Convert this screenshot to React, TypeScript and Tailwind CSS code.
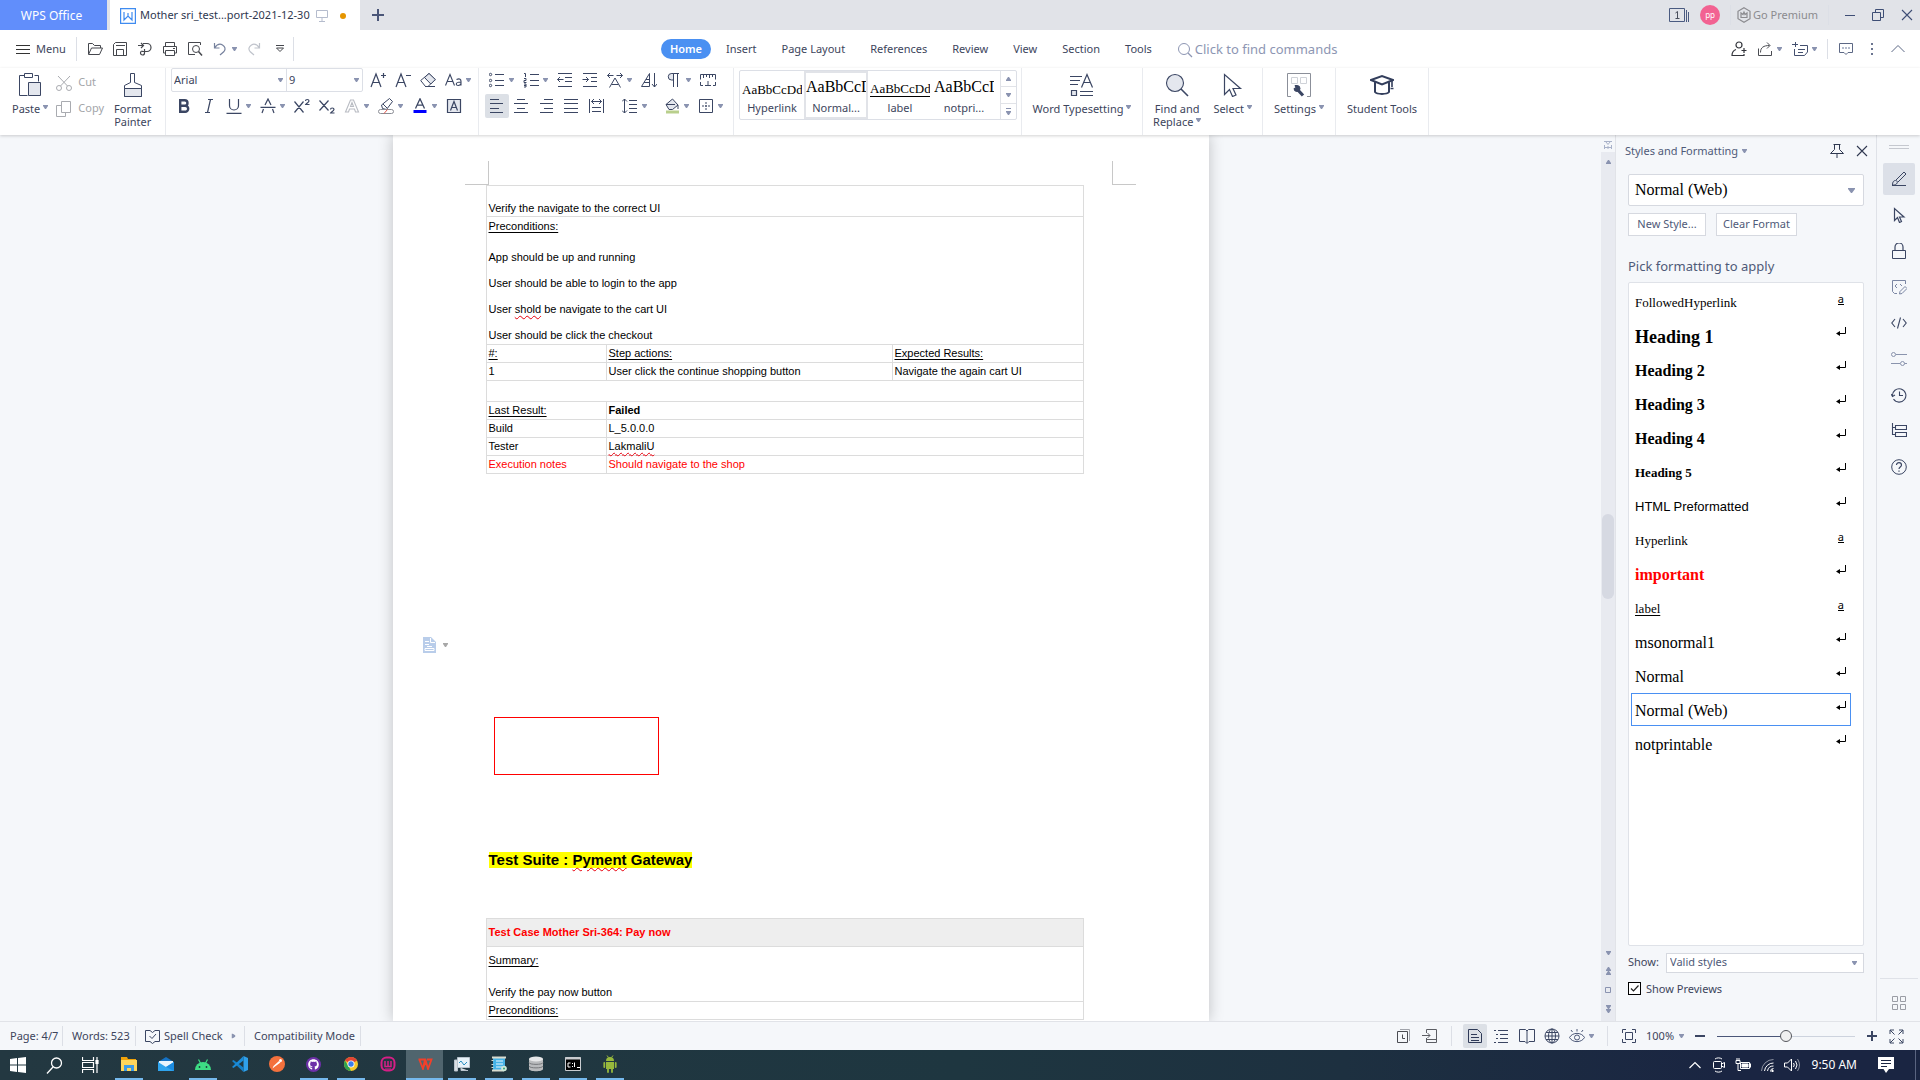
import React from "react";
import { FaGithub } from "react-icons/fa";

const INK = "#3b4663";

type IconProps = { w?: number; h?: number; c?: string; sw?: number; children: React.ReactNode };

function Icon({ w = 16, h = 16, c = INK, sw = 1, children }: IconProps) {
  return (
    <svg width={w} height={h} viewBox={`0 0 ${w} ${h}`} fill="none" stroke={c} strokeWidth={sw} className="shrink-0" aria-hidden="true">
      {children}
    </svg>
  );
}

function Caret({ c = "#8a93b0" }: { c?: string }) {
  return (
    <svg width="5" height="4" viewBox="0 0 5 4" className="shrink-0" aria-hidden="true">
      <path d="M0 0h5v1L3 4H2L0 1z" fill={c} />
    </svg>
  );
}

function Sep({ tall = false }: { tall?: boolean }) {
  return <span className={tall ? "w-px shrink-0 self-stretch bg-[#e9ebef]" : "h-5 w-px shrink-0 bg-[#dcdfe6]"} />;
}

function Tool({ label, caret, on, children }: { label: string; caret?: boolean; on?: boolean; children: React.ReactNode }) {
  return (
    <button
      type="button"
      aria-label={label}
      className={on ? "-mx-1 flex h-6 w-6 shrink-0 items-center justify-center rounded-xs bg-[#dce0e6]" : "flex h-6 shrink-0 items-center gap-1"}
    >
      {children}
      {caret && <Caret />}
    </button>
  );
}

/* ---------- Title bar ---------- */

function TitleBar() {
  return (
    <header className="flex h-[30px] shrink-0 items-center bg-[#e1e3e8] text-[11px] text-[#2f3850]">
      <button type="button" className="mr-[3px] flex h-full w-[107px] items-center justify-center bg-[#618efb] pr-1 pt-px text-xs text-white">
        WPS Office
      </button>
      <div className="flex h-full w-[250px] items-center bg-white pl-2.5 pt-px">
        <Icon c="#3f8bf0">
          <path d="M.5.5h15v15H.5z" strokeWidth="1.4" />
          <path d="M4 4v8l4-4 4 4V4M8 5v3" strokeWidth="1.2" />
        </Icon>
        <span className="ml-1 whitespace-nowrap">Mother sri_test...port-2021-12-30</span>
        <span className="ml-1.5 flex items-center gap-3">
          <Icon w={12} h={12} c="#b5bccd">
            <path d="M.5.5h11v7H.5zM6 8v3M3 11.5h6" />
          </Icon>
          <span className="h-1.5 w-1.5 rounded-full bg-[#e59500]" />
        </span>
      </div>
      <button type="button" aria-label="New tab" className="ml-3">
        <Icon w={12} h={12} sw={2} c="#4a5678">
          <path d="M6 0v12M0 6h12" />
        </Icon>
      </button>
      <div className="ml-auto flex h-full items-center">
        <button type="button" aria-label="Windows" className="mr-[11px]">
          <Icon w={20} h={15} c="#4a5a80">
            <path d="M.5.5h15v13H.5zM17.5 2v12M19.5 4v10" />
            <path d="M6.500 5L8.500 3.500V10.500M6.500 10.500h4" stroke="#4a4f5c" />
          </Icon>
        </button>
        <span className="mr-2.5 flex h-5 w-5 items-center justify-center rounded-full bg-[#f26292] text-[8px] text-white">pp</span>
        <Sep />
        <button type="button" className="ml-1.5 mr-2.5 flex items-center gap-0.5 text-[#8b8b8f]">
          <Icon w={14} h={16} c="#8b8b8f" sw={1.2}>
            <path d="M7 .8l6 3.500v7.400l-6 3.500-6-3.500V4.300z" />
            <path d="M4 10.500V6l2 1.500L7 5l1 2.500L10 6v4.500z" />
          </Icon>
          Go Premium
        </button>
        <Sep />
        <div className="ml-4 mr-[7px] flex items-center gap-[17px]">
          <button type="button" aria-label="Minimize">
            <Icon w={10} h={12} c="#3e4e75"><path d="M0 6.500h10" /></Icon>
          </button>
          <button type="button" aria-label="Restore">
            <Icon w={12} h={12} c="#3e4e75"><path d="M.5 3.500h8v8h-8zM3.500 3.500v-3h8v8h-3" /></Icon>
          </button>
          <button type="button" aria-label="Close">
            <Icon w={12} h={12} c="#3e4e75" sw={1.1}><path d="M1 1l10 10M11 1L1 11" /></Icon>
          </button>
        </div>
      </div>
    </header>
  );
}

/* ---------- Menu row ---------- */

const tabs = ["Insert", "Page Layout", "References", "Review", "View", "Section", "Tools"];

function MenuRow() {
  return (
    <nav className="flex h-[38px] shrink-0 items-center bg-white text-[#3d455c]">
      <div className="flex w-[661px] shrink-0 items-center pl-4">
        <button type="button" className="flex items-center gap-1.5 text-[11px]">
          <Icon w={14} h={11} c="#333"><path d="M0 1.500h14M0 5.500h14M0 9.500h14" /></Icon>
          Menu
        </button>
        <span className="ml-2.5 mr-2.5"><Icon w={1} h={24}><path d="M.5 0v24" stroke="#dcdfe6" /></Icon></span>
        <div className="flex items-center gap-[9px]">
          <Tool label="Open">
            <Icon c="#45474d"><path d="M1.500 13V2.500h4l2 2h6V7M1.500 13.500L4.500 7h11l-3 6.500z" /></Icon>
          </Tool>
          <Tool label="Save">
            <Icon c="#45474d"><path d="M1.500 3.500L3.500 1.500h11v13h-13zM4 4.500h9M4.500 14V8.500h7V14" /></Icon>
          </Tool>
          <Tool label="Export to PDF">
            <Icon c="#45474d" sw={1.2}><path d="M1 4.500h5M4 2l2.500 2.500L4 7M6 2.500h4a4 4 0 010 8H5M7.500 8v4a2 2 0 11-2-2" /></Icon>
          </Tool>
          <Tool label="Print">
            <Icon c="#45474d"><path d="M3.500 5V1.500h9V5M3.500 12h-2V5.500h13V12h-2M3.500 9.500h9v5h-9zM11 7.500h2" /></Icon>
          </Tool>
          <Tool label="Print preview">
            <Icon c="#45474d"><path d="M8 13.500H1.500v-12h12V4" /><circle cx="9" cy="8" r="3.500" /><path d="M11.500 10.500L15 14.500" strokeWidth="1.5" /></Icon>
          </Tool>
          <Tool label="Undo" caret>
            <Icon c="#76819d" sw={1.200}><path d="M2.500 2v5h5M2.500 7C5 3.500 8 2.500 10.500 4s3.500 4 1.500 6.500L8 14" /></Icon>
          </Tool>
          <span className="mr-1 flex">
            <Tool label="Redo">
              <Icon c="#bfc3cb" sw={1.200}><path d="M13.500 2v5h-5M13.500 7C11 3.500 8 2.500 5.500 4S2 8 4 10.500L8 14" /></Icon>
            </Tool>
          </span>
          <Tool label="Customize toolbar">
            <Icon w={10} h={10} c="#45474d"><path d="M1 1.500h8M1.500 4L5 7.500 8.500 4z" /></Icon>
          </Tool>
        </div>
        <span className="ml-2"><Icon w={1} h={24}><path d="M.5 0v24" stroke="#dcdfe6" /></Icon></span>
      </div>
      <div className="flex shrink-0 items-center gap-[25px] whitespace-nowrap pt-px text-[11px]">
        <button type="button" className="-mr-2.5 -mt-px h-5 w-[50px] rounded-full bg-[#4a90f2] text-[11px] font-semibold text-white">Home</button>
        {tabs.map((t) => (
          <button key={t} type="button">{t}</button>
        ))}
        <button type="button" className="flex items-center gap-0.5 text-[13px] text-[#8d96b3]">
          <Icon c="#8d96b3"><circle cx="7" cy="7" r="5.500" /><path d="M11 11l4 4" strokeWidth="1.3" /></Icon>
          Click to find commands
        </button>
      </div>
      <div className="ml-auto flex items-center gap-2.5 pr-3.5">
        <Tool label="Invite">
          <Icon c="#33353b" sw={1.200}><circle cx="8" cy="4" r="3" /><path d="M5 8.500c-3 1-4 3-4 6h12v-1.500M10.500 9.500h5M13 7v5" /></Icon>
        </Tool>
        <Tool label="Share" caret>
          <Icon c="#4a4c52"><path d="M1.500 7.500v7h13V10M3.500 11.500c0-5 3-7 9-7M10 1.500l3 3-3 3" /></Icon>
        </Tool>
        <Tool label="Notes" caret>
          <Icon c="#44506f"><path d="M0 3.500h6M3.500 1v5M8 4.500h7.500V11l-3 3.500h-10V8M6 8.500h7M6 11.500h5" /></Icon>
        </Tool>
        <Sep />
        <Tool label="Comments">
          <Icon c="#5c6885"><path d="M1.500 2.500h13v9H10l-2 2-2-2H1.500z" /><path d="M4 7h2M7 7h2M10 7h2" stroke="#b5bccd" strokeWidth="2" /></Icon>
        </Tool>
        <Tool label="More">
          <Icon c="#6b7590"><path d="M7 3h2M7 8h2M7 13h2" strokeWidth="2" /></Icon>
        </Tool>
        <Tool label="Collapse ribbon">
          <Icon c="#5c6885"><path d="M1.500 11L8 4.500l6.500 6.500" /></Icon>
        </Tool>
      </div>
    </nav>
  );
}

/* ---------- Ribbon ---------- */

function BigTool({ icon, lines, caret }: { icon: React.ReactNode; lines: string[]; caret?: boolean }) {
  return (
    <button type="button" className="flex shrink-0 flex-col items-center whitespace-nowrap pt-[5px] text-[11px] leading-[13px]">
      <span className="mb-[5px] flex h-6">{icon}</span>
      {lines.map((l, i) => (
        <span key={l} className="flex items-center gap-[3px]">
          {l}
          {caret && i === lines.length - 1 && <span className="mb-1"><Caret /></span>}
        </span>
      ))}
    </button>
  );
}

function StyleCard({ sample, name, on }: { sample: React.ReactNode; name: string; on?: boolean }) {
  return (
    <button
      type="button"
      className={
        on
          ? "flex w-16 flex-col items-center justify-end gap-0.5 border-2 border-[#e1e3e8] text-[11px]"
          : "flex w-16 flex-col items-center justify-end gap-0.5 border-2 border-transparent text-[11px]"
      }
    >
      {sample}
      <span className="leading-[18px]">{name}</span>
    </button>
  );
}

const sampleSmall = "w-full overflow-hidden whitespace-nowrap text-left font-['Liberation_Serif',serif] text-[13px] leading-[15px] text-black";
const sampleBig = "w-full overflow-hidden whitespace-nowrap text-left font-['Liberation_Serif',serif] text-base leading-5 text-black";

function Ribbon() {
  return (
    <section className="z-10 flex h-[67px] shrink-0 bg-white text-[11px] text-[#3d455c] shadow-[0_1px_3px_rgba(0,0,0,0.18)]">
      <div className="flex w-[165px] shrink-0 gap-2 pl-3">
        <BigTool
          lines={["Paste"]}
          caret
          icon={
            <Icon w={22} h={24}>
              <path d="M5.500 2.500h-5v20h8M15.500 2.500h4v6" />
              <path d="M5.500.5h8v4h-8z" fill="#fff" />
              <path d="M9.500 9.500h12v13h-12z" fill="#e4e7ee" />
            </Icon>
          }
        />
        <div className="mr-0.5 flex flex-col gap-[9px] pt-1.5 text-[11px] text-[#a3a5a9]">
          <button type="button" className="flex h-[17px] items-center gap-1.5">
            <Icon c="#a9abb0"><circle cx="3" cy="13" r="2.500" /><circle cx="13" cy="13" r="2.500" /><path d="M4.500 11L14 1M11.500 11L2 1" /></Icon>
            Cut
          </button>
          <button type="button" className="flex h-[17px] items-center gap-1.5">
            <Icon c="#a9abb0"><path d="M5.500.5h9v11h-9z" /><path d="M5 4.500H.5v11h9V12" /></Icon>
            Copy
          </button>
        </div>
        <BigTool
          lines={["Format", "Painter"]}
          icon={
            <Icon w={20} h={24}>
              <path d="M7.500 9.500v-9h4v9l7 3v11h-17v-11z" />
              <path d="M1.500 15.500h17v8h-17z" fill="#e4e7ee" />
            </Icon>
          }
        />
      </div>
      <Sep tall />
      <div className="flex w-[312px] shrink-0 flex-col gap-0.5 pl-[5px]">
        <div className="flex items-center gap-[9px]">
          <div className="-mr-0.5 flex h-6 w-48 rounded-xs border border-[#dcdfe6]">
            <div className="flex w-[115px] items-center border-r border-[#dcdfe6] pl-0.5 pr-[3px]">
              <select aria-label="Font" className="min-w-0 flex-1 appearance-none bg-transparent text-[11px] outline-none"><option>Arial</option></select>
              <Caret />
            </div>
            <div className="flex flex-1 items-center pl-0.5 pr-[3px]">
              <select aria-label="Font size" className="min-w-0 flex-1 appearance-none bg-transparent text-[11px] outline-none"><option>9</option></select>
              <Caret />
            </div>
          </div>
          <Tool label="Increase font size"><Icon sw={1.2}><path d="M1 15L6 2l5 13M3 10.500h6M11 3.500h5M13.500 1v5" /></Icon></Tool>
          <Tool label="Decrease font size"><Icon sw={1.2}><path d="M1 15L6 2l5 13M3 10.500h6M11 3.500h5" /></Icon></Tool>
          <Tool label="Clear formatting"><Icon><path d="M.7 8.500L9 1.500l6.300 6L8 14.500H5.500z" /><path d="M4.500 5.500L9 1.500l6.300 6-4.500 4.500z" fill="#e4e7ee" /><path d="M5 14.500h10" /></Icon></Tool>
          <Tool label="Change case" caret>
            <Icon w={17} sw={1.1}><path d="M.5 13.500L5 2.500l4.500 11M2 9.500h6M11.500 7.500c3.500-1.500 4.500 0 4.500 2v4M16 10c-3 0-4.700.500-4.700 2 0 2 3.700 2 4.700-.5" /></Icon>
          </Tool>
        </div>
        <div className="flex items-center gap-[9px] pl-[5px]">
          <Tool label="Bold"><Icon sw={2.4}><path d="M4.200 2.200h4.500a2.800 2.800 0 010 5.600H4.200zM4.200 7.800h5a3 3 0 010 6H4.200z" /></Icon></Tool>
          <Tool label="Italic"><Icon sw={1.2}><path d="M7 1.500h5M4 14.500h5M9.500 1.500l-3 13" /></Icon></Tool>
          <Tool label="Underline" caret><Icon sw={1.2}><path d="M3.500 1v6.500a4.500 4.500 0 009 0V1M.5 15.400h15" /></Icon></Tool>
          <Tool label="Strikethrough" caret><Icon sw={1.2}><path d="M5 7l3-6 3 6M3.500 11L2 15M12.500 11l1.500 4M.5 9.400h15" /></Icon></Tool>
          <Tool label="Superscript"><Icon sw={1.2}><path d="M.5 3.500l9 11M9.500 3.500l-9 11M11.500 3c0-2 3.500-2 3.500 0 0 1.200-3.500 3-3.500 3.500H15.500" /></Icon></Tool>
          <Tool label="Subscript"><Icon sw={1.2}><path d="M.5 2.500l9 10M9.500 2.500l-9 10M11.500 11.500c0-2 3.500-2 3.500 0 0 1.200-3.500 3-3.500 3.500H15.500" /></Icon></Tool>
          <Tool label="Text effects" caret><Icon c="#b9bcc3" sw={1.1}><path d="M1.500 14L6.500 2h3l5 12h-3l-1-3h-5l-1 3zM6.500 8.500h3L8 4.500z" /></Icon></Tool>
          <Tool label="Highlight" caret>
            <Icon><path d="M4.500 10.500L3.500 7l8-6.500 3 3-6 8z" /><path d="M5 6l4 4" /><rect x=".5" y="11.500" width="15" height="4" rx="2" fill="#fff" stroke="#8a8d95" /><path d="M6 15.500l3.500-4" stroke="#e2574c" /></Icon>
          </Tool>
          <Tool label="Font color" caret><Icon sw={1.3}><path d="M3.500 10.500L8 .8l4.500 9.700M5 7.200h6" /><path d="M1.500 13.500h13" stroke="#0000ff" strokeWidth="3" /></Icon></Tool>
          <Tool label="Character shading"><Icon sw={1.200}><path d="M1.500 1.500h13v13h-13z" fill="#e4e7ee" /><path d="M4.500 12.500L8 3.500l3.500 9M5.500 9.500h5" /></Icon></Tool>
        </div>
      </div>
      <Sep tall />
      <div className="flex w-[254px] shrink-0 flex-col gap-0.5 pl-2.5">
        <div className="flex items-center gap-[9px]">
          <Tool label="Bullets" caret><Icon><circle cx="1.500" cy="2.500" r="1.200" /><circle cx="1.500" cy="8.500" r="1.200" /><circle cx="1.500" cy="13.500" r="1.200" /><path d="M6 2.500h9M6 8.500h9M6 13.500h9" /></Icon></Tool>
          <Tool label="Numbering" caret><Icon><path d="M1 1.500h1.500v3.500M1 6.500h2v2H1v2h2.500M1 12h2v3H1M1 13.500h2M7 2.500h9M7 8.500h9M7 13.500h9" /></Icon></Tool>
          <Tool label="Decrease indent"><Icon><path d="M1 1.500h14M8 5.500h7M8 9.500h7M1 14.500h14M.5 7.500h6M3 5L.5 7.500 3 10" /></Icon></Tool>
          <Tool label="Increase indent"><Icon><path d="M1 1.500h14M9 5.500h6M9 9.500h6M1 14.500h14M.5 7.500h6M4 5l2.500 2.500L4 10" /></Icon></Tool>
          <Tool label="Text direction" caret><Icon><path d="M2.500 15.500L8 6l5.500 9.500M4.500 12.500h7M.5 3.500h6M9.500 3.500h6M3 1L.5 3.500 3 6M13 1l2.500 2.500L13 6" /></Icon></Tool>
          <Tool label="Sort"><Icon><path d="M.5 14.500L8.500 1.500v13zM3 10.500h5M5 7.500h3M13.500 1v14M11 12l2.500 3 2.500-3" /></Icon></Tool>
          <Tool label="Show marks" caret><Icon><path d="M7.500 15V1.500M11.500 15V1.500M5 1.500h8" /><path d="M7.500 1.500h-2a3 3 0 000 6.500h2z" fill="#e4e7ee" /></Icon></Tool>
          <Tool label="Tabs"><Icon><path d="M.5 7.500v-5h15v5M3.500 3v3M6.500 3v2M9.500 3v3M12.500 3v2M.5 10v3.500H3M15.500 10v3.500H13M8 9v4.500M5 13.500h6" /></Icon></Tool>
        </div>
        <div className="flex items-center gap-[9px]">
          <Tool label="Align left" on><Icon><path d="M1 1.500h9M1 5.500h13M1 10.500h9M1 14.500h13" /></Icon></Tool>
          <Tool label="Align center"><Icon><path d="M3 1.500h8M0 5.500h14M3 10.500h8M0 14.500h14" /></Icon></Tool>
          <Tool label="Align right"><Icon><path d="M5 1.500h9M1 5.500h13M5 10.500h9M1 14.500h13" /></Icon></Tool>
          <Tool label="Justify"><Icon><path d="M0 1.500h14M0 5.500h14M0 10.500h14M0 14.500h14" /></Icon></Tool>
          <span className="mr-2 flex"><Tool label="Distribute"><Icon><path d="M.5 1v14M14.500 1v14M2.500 3.500h10M5 1L2.500 3.500 5 6M10 1l2.500 2.500L10 6M3 9.500h9M3 13.500h9" /></Icon></Tool></span>
          <span className="mr-2 flex"><Tool label="Line spacing" caret><Icon><path d="M2.500 1v14M0 3.500L2.500 1 5 3.500M0 12.500L2.500 15 5 12.500M7 2.500h8M7 6.500h8M7 10.500h8M7 14.500h8" /></Icon></Tool></span>
          <Tool label="Shading" caret><Icon><path d="M2 6.500L8.500 1l5.500 6-5.500 4.500H5z" fill="#e4e7ee" /><path d="M2 6.500h9M14 7v4" /><path d="M2 14h13" stroke="#b9cf8c" strokeWidth="3" /></Icon></Tool>
          <Tool label="Borders" caret><Icon><path d="M1.500 1.500h13v13h-13z" /><path d="M8 4v8M4 8h8" strokeDasharray="2 1" /></Icon></Tool>
        </div>
      </div>
      <Sep tall />
      <div className="flex w-[287px] shrink-0 items-start pl-[5px] pt-0.5">
        <div className="flex h-[50px] w-[278px] rounded-xs border border-[#dcdfe6]">
          <StyleCard name="Hyperlink" sample={<span className={sampleSmall}>AaBbCcDd</span>} />
          <StyleCard name="Normal..." on sample={<span className={sampleBig}>AaBbCcD</span>} />
          <StyleCard name="label" sample={<span className={sampleSmall + " border-b border-black"}>AaBbCcDd</span>} />
          <StyleCard name="notpri..." sample={<span className={sampleBig}>AaBbCcD</span>} />
          <div className="ml-auto flex w-4 flex-col divide-y divide-[#e1e3e8] border-l border-[#e1e3e8]">
            <button type="button" aria-label="Previous styles" className="flex flex-1 items-center justify-center"><span className="rotate-180"><Caret /></span></button>
            <button type="button" aria-label="Next styles" className="flex flex-1 items-center justify-center"><Caret /></button>
            <button type="button" aria-label="All styles" className="flex flex-1 flex-col items-center justify-center gap-0.5"><span className="h-px w-[5px] bg-[#8a93b0]" /><Caret /></button>
          </div>
        </div>
      </div>
      <Sep tall />
      <div className="flex w-[120px] shrink-0 justify-center">
        <BigTool lines={["Word Typesetting"]} caret icon={<Icon w={24} h={24} sw={1.2}><path d="M0 3.500h12M0 7.500h10M0 11.500h8M11.500 14.500L17 1.500l5.500 13M13.500 9.500h7M10 18.500h13M10 22.500h13" /><path d="M1.500 17.500h5v5h-5z" fill="#e4e7ee" /></Icon>} />
      </div>
      <Sep tall />
      <div className="flex w-[119px] shrink-0 justify-center gap-3">
        <BigTool lines={["Find and", "Replace"]} caret icon={<Icon w={24} h={24} sw={1.1}><circle cx="10" cy="10" r="8.500" fill="#e4e7ee" /><path d="M16 16l7 7" strokeWidth="1.6" /></Icon>} />
        <BigTool lines={["Select"]} caret icon={<Icon w={20} h={24} sw={1.2}><path d="M1.500 1.500v20l5-5 3 7 3.500-1.500-3-6.500h7.500z" fill="#fff" /></Icon>} />
      </div>
      <Sep tall />
      <div className="flex w-[72px] shrink-0 justify-center">
        <BigTool
          lines={["Settings"]}
          caret
          icon={
            <Icon w={24} h={24} c="#8b8f99">
              <path d="M4 23.500H.5V.5h23v23H20" />
              <path d="M4.500 4.500h6v6h-6zM13.500 4.500h6v6h-6z" stroke="#cfd2d8" />
              <path d="M10 16l6 6.500" stroke={INK} strokeWidth="3.200" />
              <path d="M8 12.500l1 2.500-2 .5a3 3 0 103-3z" fill={INK} stroke={INK} />
            </Icon>
          }
        />
      </div>
      <Sep tall />
      <div className="flex w-[92px] shrink-0 justify-center">
        <BigTool lines={["Student Tools"]} icon={<Icon w={24} h={24} sw={2} c="#333e5c"><path d="M1 7l11-4 11 4-11 4.500zM5 9.500V19c2 2.500 12 2.500 14 0V9.500" /><path d="M22 8v6M20.500 15.500h3" strokeWidth="1.6" /></Icon>} />
      </div>
      <Sep tall />
    </section>
  );
}

/* ---------- Document ---------- */

function Typo({ children }: { children: string }) {
  return <span className="underline decoration-red-600 decoration-wavy decoration-1 underline-offset-2">{children}</span>;
}

const cell = "border border-[#dcdcdc] p-0 pl-0.5 align-top";
const row = cell + " h-[18px] leading-[17px]";

function CaseTable() {
  return (
    <table className="w-full table-fixed border-collapse text-black">
      <colgroup>
        <col className="w-[120px]" />
        <col className="w-[286px]" />
        <col />
      </colgroup>
      <tbody>
        <tr><td colSpan={3} className="h-[31px] border border-[#dcdcdc] p-0 pl-0.5 align-bottom leading-[15px]">Verify the navigate to the correct UI</td></tr>
        <tr>
          <td colSpan={3} className={cell + " h-32 leading-[18px]"}>
            <p className="underline underline-offset-2">Preconditions:</p>
            <div className="mt-[13px] flex flex-col gap-2">
              <p>App should be up and running</p>
              <p>User should be able to login to the app</p>
              <p>User <Typo>shold</Typo> be navigate to the cart UI</p>
              <p>User should be click the checkout</p>
            </div>
          </td>
        </tr>
        <tr className="underline underline-offset-2">
          <td className={row}>#:</td>
          <td className={row}>Step actions:</td>
          <td className={row}>Expected Results:</td>
        </tr>
        <tr>
          <td className={row}>1</td>
          <td className={row}>User click the continue shopping button</td>
          <td className={row}>Navigate the again cart UI</td>
        </tr>
        <tr><td colSpan={3} className={cell + " h-[21px]"} /></tr>
        <tr><td className={row + " underline underline-offset-2"}>Last Result:</td><td colSpan={2} className={row + " font-bold"}>Failed</td></tr>
        <tr><td className={row}>Build</td><td colSpan={2} className={row}>L_5.0.0.0</td></tr>
        <tr><td className={row}>Tester</td><td colSpan={2} className={row}><Typo>LakmaliU</Typo></td></tr>
        <tr className="text-[#ff0000]"><td className={row}>Execution notes</td><td colSpan={2} className={row}>Should navigate to the shop</td></tr>
      </tbody>
    </table>
  );
}

function Document() {
  return (
    <main className="flex min-w-0 flex-1 justify-center overflow-hidden bg-[#f5f7fa]">
      <article className="w-[816px] shrink-0 bg-white pt-[26px] font-['Liberation_Sans',Arial,sans-serif] text-[11px] shadow-[0_0_14px_rgba(0,0,0,0.22)]">
        <div className="flex justify-between pl-[72px] pr-[73px]">
          <span className="h-6 w-6 border-b border-r border-[#c8c8c8]" />
          <span className="h-6 w-6 border-b border-l border-[#c8c8c8]" />
        </div>
        <div className="pl-[93px] pr-[125px]"><CaseTable /></div>
        <button type="button" aria-label="Paragraph layout" className="ml-[30px] mt-[163px] flex items-center gap-[7px]">
          <svg width="13" height="16" viewBox="0 0 13 16" aria-hidden="true">
            <path d="M0 0h8l5 5v11H0z" fill="#b9cdea" />
            <path d="M7.500 1v4.500H12M2 4.500h4M2 7.500h4M2 11.500h9v2H2zM4 9.500h5" stroke="#fff" fill="none" />
          </svg>
          <Caret c="#a8a8a8" />
        </button>
        <div className="ml-[101px] mt-16 h-[58px] w-[165px] border border-[#ff0000]" />
        <h2 className="ml-24 mt-[77px] w-fit bg-[#ffff00] text-[15px] font-bold leading-4 text-black">
          Test Suite : <Typo>Pyment</Typo> Gateway
        </h2>
        <div className="mt-[50px] pl-[93px] pr-[125px]">
          <table className="w-full border-collapse text-black">
            <tbody>
              <tr><th className="h-7 border border-[#dcdcdc] bg-[#eeeeee] p-0 pl-0.5 text-left font-bold text-[#ff0000]">Test Case Mother Sri-364: Pay now</th></tr>
              <tr>
                <td className={cell + " h-[55px] pt-[5px] leading-[17px]"}>
                  <p className="underline underline-offset-2">Summary:</p>
                  <p className="mt-[15px]">Verify the pay now button</p>
                </td>
              </tr>
              <tr><td className={row + " underline underline-offset-2"}>Preconditions:</td></tr>
            </tbody>
          </table>
        </div>
      </article>
    </main>
  );
}

function ScrollBar() {
  return (
    <div className="flex w-[15px] shrink-0 flex-col items-center border-r border-[#e1e3e8] bg-[#e8eaf0]">
      <div className="flex h-[17px] w-full items-center justify-center bg-[#f5f7fa] pt-0.5">
        <Icon w={8} h={8} c="#a9b2c9"><path d="M0 .5h8M2 1l2 2.500L6 1M0 6.500h8M.5 4v4M4 5v3M7.500 4v4" /></Icon>
      </div>
      <span className="mt-2 rotate-180"><Caret /></span>
      <div className="flex w-full flex-1 flex-col items-center">
        <div className="grow-[350]" />
        <div className="h-[85px] w-3 rounded-full bg-[#d6d9e2]" />
        <div className="grow-[353]" />
      </div>
      <div className="flex flex-col items-center gap-3 pb-2">
        <Caret />
        <span className="flex rotate-180 flex-col"><Caret /><Caret /></span>
        <Icon w={6} h={6} c="#8a93b0"><path d="M.5.5h5v5h-5z" /></Icon>
        <span className="flex flex-col"><Caret /><Caret /></span>
      </div>
    </div>
  );
}

/* ---------- Styles panel ---------- */

type StyleItem = { name: string; cls: string; char?: boolean; on?: boolean };

const styleItems: StyleItem[] = [
  { name: "FollowedHyperlink", cls: "text-[13px]", char: true },
  { name: "Heading 1", cls: "text-lg font-bold" },
  { name: "Heading 2", cls: "text-base font-bold" },
  { name: "Heading 3", cls: "text-base font-bold" },
  { name: "Heading 4", cls: "text-base font-bold" },
  { name: "Heading 5", cls: "text-[13px] font-bold" },
  { name: "HTML Preformatted", cls: "font-['Liberation_Sans',Arial,sans-serif] text-[13px]" },
  { name: "Hyperlink", cls: "text-[13px]", char: true },
  { name: "important", cls: "text-base font-bold text-[#ff0000]" },
  { name: "label", cls: "text-[13px] underline underline-offset-2", char: true },
  { name: "msonormal1", cls: "text-base" },
  { name: "Normal", cls: "text-base" },
  { name: "Normal (Web)", cls: "text-base", on: true },
  { name: "notprintable", cls: "text-base" },
];

function StylesPanel() {
  return (
    <aside className="flex w-[260px] shrink-0 flex-col bg-[#f5f7fa] px-3 text-[11px] text-[#4f5a78]">
      <div className="-ml-[3px] flex h-[39px] shrink-0 items-center pt-px pb-2">
        <button type="button" className="flex items-center gap-1">Styles and Formatting <Caret /></button>
        <div className="-mr-1 ml-auto flex items-center gap-3">
          <button type="button" aria-label="Pin"><Icon w={14} h={14} c="#2f3850"><path d="M3.500.5h7M4.500.5v5L.5 9.500h13l-4-4v-5M7 9v5" /></Icon></button>
          <button type="button" aria-label="Close panel"><Icon w={12} h={12} c="#2f3850" sw={1.1}><path d="M1 1l10 10M11 1L1 11" /></Icon></button>
        </div>
      </div>
      <div className="flex h-8 shrink-0 items-center rounded-xs border border-[#d6d9e0] bg-white pl-1.5 pr-2">
        <select aria-label="Current style" className="flex-1 appearance-none bg-transparent font-['Liberation_Serif',serif] text-base text-black outline-none"><option>Normal (Web)</option></select>
        <svg width="7" height="5" viewBox="0 0 7 5" aria-hidden="true"><path d="M0 0h7v1L4 5H3L0 1z" fill="#8a93b0" /></svg>
      </div>
      <div className="mt-[7px] flex gap-2.5">
        <button type="button" className="h-[23px] w-[78px] border border-[#d6d9e0] bg-white">New Style...</button>
        <button type="button" className="h-[23px] w-[81px] border border-[#d6d9e0] bg-white">Clear Format</button>
      </div>
      <h3 className="mt-5 text-[13px] leading-5">Pick formatting to apply</h3>
      <ul className="mt-1.5 flex-1 overflow-hidden rounded-xs border border-[#dfe2e8] bg-white pl-0.5 pt-0.5 font-['Liberation_Serif',serif] text-black">
        {styleItems.map((s) => (
          <li
            key={s.name}
            className={
              s.on
                ? "mr-3 mb-px flex h-[33px] items-start justify-between border border-[#4a90f2] pl-[3px] pr-1 pt-[7px]"
                : "mr-3 mb-px flex h-[33px] items-start justify-between border border-transparent pl-[3px] pr-1 pt-[7px]"
            }
          >
            <button type="button" className={s.cls + " text-left leading-[20px]!"}>{s.name}</button>
            {s.char ? (
              <span className="mr-0.5 border-b border-black font-['Noto_Sans',sans-serif] text-[11px] leading-[11px]">a</span>
            ) : (
              <Icon w={10} h={10} c="#000"><path d="M9.500 0v6.500H1" /><path d="M0 6.500L4 4v5z" fill="#000" stroke="none" /></Icon>
            )}
          </li>
        ))}
      </ul>
      <div className="mt-[7px] flex shrink-0 items-center">
        <label htmlFor="show-styles" className="w-[38px] text-[#3d455c]">Show:</label>
        <div className="flex h-5 flex-1 items-center border border-[#d6d9e0] bg-white pl-[3px] pr-1.5">
          <select id="show-styles" className="flex-1 appearance-none bg-transparent outline-none"><option>Valid styles</option></select>
          <Caret />
        </div>
      </div>
      <label className="mb-6 mt-2 flex shrink-0 items-center gap-[5px] text-[#3d455c]">
        <span className="grid place-items-center">
          <input type="checkbox" defaultChecked className="col-start-1 row-start-1 h-[13px] w-[13px] appearance-none border border-black bg-white" />
          <svg width="13" height="13" viewBox="0 0 13 13" className="pointer-events-none col-start-1 row-start-1" aria-hidden="true"><path d="M3 6.500L5.500 9 10.500 3.500" fill="none" stroke="#222" strokeWidth="1.2" /></svg>
        </span>
        Show Previews
      </label>
    </aside>
  );
}

const sideIcons: { label: string; c?: string; d: React.ReactNode; on?: boolean }[] = [
  { label: "Styles", on: true, d: <><path d="M1 14.500h14M1.500 14c0-3 1-4.500 3-4.500s2.500 2 1 3.500-4 1-4 1zM5 9l8-8 2 2-8 8" /></> },
  { label: "Selection", d: <path d="M3.500 1.500v12l3-3 2 5 2-1-2-4.500H13z" strokeWidth="1.2" /> },
  { label: "Protect", d: <><path d="M1.500 7.500h13v8h-13z" /><path d="M4 7V4a4 4 0 018 0v3" strokeWidth="1.2" /></> },
  { label: "Macros", c: "#7b86a3", d: <path d="M6 14.500H3.500l-2-2v-11h13V5M6 5L4 7l2 2M9 5l2 2M8.500 15l.5-2.500 5-5 2 2-5 5z" /> },
  { label: "XML", d: <path d="M4 4L.8 8 4 12M12 4l3.200 4L12 12M9.500 2.500l-3 11" strokeWidth="1.1" /> },
  { label: "Options", c: "#8a94ad", d: <><circle cx="2.500" cy="3.500" r="2" /><path d="M5 3.500h11M0 12.500h9M13.500 12.500H16" /><circle cx="11.500" cy="12.500" r="2" /></> },
  { label: "History", d: <path d="M1.500 9A6.700 6.700 0 112.500 12M0 7l1.500 2.500L4 8M8.500 4.500v4H12" strokeWidth="1.1" /> },
  { label: "Outline", d: <path d="M1.500 0v11.500H4M1.500 4.500H4M4.500 2.500h11v4h-11zM4.500 9.500h11v4h-11z" strokeWidth="1.100" /> },
  { label: "Help", d: <><circle cx="8" cy="8" r="7.300" /><path d="M5.500 6c0-3.300 5-3 5 0 0 2-2.500 2-2.500 4M8 11.500v1.300" strokeWidth="1.200" /></> },
];

function SideRail() {
  return (
    <div className="flex w-11 shrink-0 flex-col items-center border-l border-[#dfe2e8] bg-[#f5f7fa]">
      <div className="mt-2.5 flex flex-col gap-0.5"><span className="h-px w-5 bg-[#c5c8cf]" /><span className="h-px w-5 bg-[#c5c8cf]" /></div>
      <div className="mt-3.5 flex flex-col gap-1">
        {sideIcons.map((s) => (
          <button
            key={s.label}
            type="button"
            aria-label={s.label}
            className={s.on ? "flex h-8 w-8 items-center justify-center rounded-xs bg-[#dce0e8]" : "flex h-8 w-8 items-center justify-center"}
          >
            <Icon c={s.c}>{s.d}</Icon>
          </button>
        ))}
      </div>
      <div className="mt-auto flex h-[43px] w-[38px] items-center justify-center border-t border-[#dfe2e8] pt-1.5">
        <button type="button" aria-label="Apps">
          <Icon w={14} h={14} c="#9a9da5"><path d="M.5.5h5v5h-5zM8.500.5h5v5h-5zM.5 8.500h5v5h-5zM8.500 8.500h5v5h-5z" /></Icon>
        </button>
      </div>
    </div>
  );
}

/* ---------- Status bar ---------- */

function StatusBar() {
  return (
    <footer className="flex h-[29px] shrink-0 items-center border-t border-[#e1e3e8] bg-[#f5f7fa] text-[11px] text-[#3d455c]">
      <div className="flex items-center pl-2.5">
        <span className="w-[52px] whitespace-nowrap">Page: 4/7</span>
        <Sep />
        <span className="w-[72px] whitespace-nowrap pl-[9px]">Words: 523</span>
        <Sep />
        <button type="button" className="flex w-[108px] items-center pl-[9px]">
          <Icon w={15} h={15}><path d="M5 1.500H.5v11H5l2.500 2 2.500-2h4.500v-11H10L7.500 3.500z" /><path d="M4.500 7L7 9.500 11 5" /></Icon>
          <span className="ml-1 whitespace-nowrap">Spell Check</span>
          <span className="ml-2 -rotate-90"><Caret /></span>
        </button>
        <Sep />
        <span className="w-[115px] whitespace-nowrap pl-[9px]">Compatibility Mode</span>
        <Sep />
      </div>
      <div className="ml-auto flex items-center gap-[9px] pr-4">
        <Tool label="Recent"><Icon c="#4a4c52"><path d="M.5 3.500h10v11H.5z" /><path d="M3 1.500h9.500V13" stroke="#a0a3aa" /><path d="M5.500 6.500v4H8" /></Icon></Tool>
        <Tool label="Send to phone"><Icon c="#5c5e64"><path d="M4.500 5V1.500h10v13h-10V10M0 7.500h8M5.500 5L8 7.500 5.500 10M5 11.500h9" /></Icon></Tool>
        <span className="mx-1 flex"><Sep /></span>
        <span className="mx-0.5 flex"><Tool label="Print layout" on><Icon c="#2f3a58"><path d="M1.500 1.500h9l4 4v9h-13zM4 6.500h6M4 9.500h8M4 12.500h8" /></Icon></Tool></span>
        <Tool label="Outline view"><Icon><path d="M0 2.500h2M4 2.500h10M2 6.500h2M6 6.500h8M2 10.500h2M6 10.500h8M0 14.500h2M4 14.500h10" /></Icon></Tool>
        <Tool label="Reading view"><Icon><path d="M.5 1.500h6L8 3l1.500-1.500h6v12H10l-2 2-2-2H.5zM8 3v12" /></Icon></Tool>
        <Tool label="Web view"><Icon><circle cx="8" cy="8" r="7" /><ellipse cx="8" cy="8" rx="3.500" ry="7" /><path d="M1 8h14M2 4.500h12M2 11.500h12M8 1v14" /></Icon></Tool>
        <Tool label="Eye protection" caret><Icon c="#4c5878"><path d="M.5 9.500C3.500 4 12.500 4 15.500 9.500 12.500 15 3.500 15 .5 9.500zM2 2l1.500 2M14 2l-1.500 2M8 1v2.500" /><circle cx="8" cy="9.500" r="2.500" /></Icon></Tool>
        <span className="mx-1 flex"><Sep /></span>
        <Tool label="Fit page"><Icon><path d="M1.500 5V1.500H5M11 1.500h3.500V5M14.500 11v3.500H11M5 14.500H1.500V11M4.500 4.500h7v7h-7z" /></Icon></Tool>
        <button type="button" className="flex w-[38px] items-center justify-between">100% <Caret /></button>
        <div className="ml-0.5 flex items-center gap-3">
          <button type="button" aria-label="Zoom out"><Icon w={10} h={10} sw={2}><path d="M0 5h10" /></Icon></button>
          <input
            type="range"
            aria-label="Zoom"
            defaultValue={50}
            className="h-3 w-[138px] appearance-none bg-[linear-gradient(to_right,#4a5678_50%,#cdd3de_50%)] bg-[length:100%_1px] bg-center bg-no-repeat [&::-webkit-slider-thumb]:h-3 [&::-webkit-slider-thumb]:w-3 [&::-webkit-slider-thumb]:appearance-none [&::-webkit-slider-thumb]:rounded-full [&::-webkit-slider-thumb]:border [&::-webkit-slider-thumb]:border-[#55575d] [&::-webkit-slider-thumb]:bg-[#f0f0f0]"
          />
          <button type="button" aria-label="Zoom in"><Icon w={10} h={10} sw={2}><path d="M0 5h10M5 0v10" /></Icon></button>
          <button type="button" aria-label="Full screen"><Icon w={15} h={15}><path d="M1 5V1h4M1 1l4.500 4.500M10 1h4v4M14 1L9.500 5.500M14 10v4h-4M14 14L9.500 9.500M5 14H1v-4M1 14l4.500-4.500" /></Icon></button>
        </div>
      </div>
    </footer>
  );
}

/* ---------- Taskbar ---------- */

const apps: { label: string; open?: boolean; on?: boolean; art: React.ReactNode }[] = [
  { label: "File Explorer", open: true, art: <Icon w={18} c="none"><path d="M1 1h6l1 2h8v4H1z" fill="#f0a30a" /><path d="M1 4h16v11H1z" fill="#ffd65c" /><path d="M4 9h10v6h-3v-3H7v3H4z" fill="#3c9be8" /></Icon> },
  { label: "Mail", art: <Icon w={18} c="none"><path d="M1 6l8-5 8 5v9H1z" fill="#1572c4" /><path d="M2 5h14v5l-7 3-7-3z" fill="#e9f4fd" /><path d="M1 6l8 5 8-5v9H1z" fill="#2fa4ee" /><path d="M9 11l8-5v9z" fill="#1b8be0" /></Icon> },
  { label: "Android Studio", open: true, art: <Icon w={18} c="none"><path d="M1 14a8 8 0 0116 0z" fill="#3ddc84" /><path d="M4.500 3.500L7 8M13.500 3.500L11 8" stroke="#3ddc84" strokeWidth="1.2" /><circle cx="5.500" cy="11" r=".9" fill="#1e3a3c" /><circle cx="12.500" cy="11" r=".9" fill="#1e3a3c" /></Icon> },
  { label: "VS Code", art: <Icon w={18} c="none"><path d="M12.500 0L17 2v12l-4.500 2z" fill="#2fa0ea" /><path d="M1 5l1.500-1L12.500 11.500V16z" fill="#1580c8" /><path d="M1 11l1.500 1L12.500 4.500V0z" fill="#1b8cd8" /></Icon> },
  { label: "Postman", art: <Icon w={18} c="none"><circle cx="9" cy="8" r="8" fill="#f4713d" /><path d="M4.500 12.500l1-2.500L11 5l1.500 1.500-5.500 4z" fill="#fff" /><circle cx="12.500" cy="4.500" r="1.500" fill="#fff" /></Icon> },
  { label: "GitHub Desktop", open: true, art: <span className="flex h-[15px] w-[15px] items-center justify-center rounded-full bg-[#6d30a8]"><FaGithub size={11} color="#fff" /></span> },
  { label: "Chrome", open: true, art: <Icon w={14} h={14} c="none"><circle cx="7" cy="7" r="7" fill="#f6c72c" /><path d="M7 7L1 3.500a7 7 0 0112.100 0z" fill="#e24434" /><path d="M1 3.500L5.500 11l1.500 3A7 7 0 011 3.500z" fill="#2ca350" /><circle cx="7" cy="7" r="3.500" fill="#fff" /><circle cx="7" cy="7" r="2.700" fill="#3b7ded" /></Icon> },
  { label: "Wamp", art: <Icon w={16} c="#d61f86" sw={2}><rect x="1.500" y="1.500" width="13" height="13" rx="5" /><path d="M5 5v5.500h6V5M8 5v5" strokeWidth="1.500" /><path d="M5 13h6" strokeWidth="1" /></Icon> },
  { label: "WPS Office", open: true, on: true, art: <Icon w={16} h={12} c="#f2402a" sw={1.8}><path d="M1.500 1.500h6.500l-2 9.500-3.500-9M5.500 11L9 3.500l2 7.500 3.500-9.500H10" /></Icon> },
  { label: "Monitor", open: true, art: <Icon w={18} c="#b9c3cc"><path d="M4.500 1.500h12v10h-12z" fill="#e8f2f8" /><path d="M6 7l2-2 3 4 3-3" stroke="#2a8fc0" /><path d="M1.500 4h3v11h-3zM8 12v2.500h7" fill="#d9dfe3" /></Icon> },
  { label: "Notepad", open: true, art: <Icon w={18} c="none"><path d="M3 1h12v14H3z" fill="#46b2e6" /><path d="M2 1.500h14M2 14.500h12" stroke="#d9dccf" strokeWidth="2" /><path d="M6 5h7M6 8h7M6 11h6" stroke="#e8f6fd" /><path d="M2.500 4v1M2.500 8v1M2.500 11v1" stroke="#d9dccf" strokeWidth="2" /><circle cx="14" cy="12.500" r="2.800" fill="#cfe9da" /><circle cx="14" cy="12.500" r="1" fill="#35a273" /></Icon> },
  { label: "Database", open: true, art: <Icon w={18} c="#77797c"><path d="M2 3v10c0 3 14 3 14 0V3" fill="#b9bbbd" stroke="none" /><ellipse cx="9" cy="3" rx="7" ry="2.500" fill="#e6e7e8" stroke="none" /><path d="M2 6.500c0 2.500 14 2.500 14 0M2 10c0 2.500 14 2.500 14 0" /></Icon> },
  { label: "Command Prompt", open: true, art: <Icon w={18} c="#c9ccd0"><path d="M1.500 1.500h15v13h-15z" fill="#000" /><path d="M1 2.500h16" strokeWidth="2" /><path d="M6.500 7H4v4h2.500M8 7.500h1M8 10.500h1M10.500 6.500v4.500M13 11.500h3" stroke="#fff" /></Icon> },
  { label: "Emulator", open: true, art: <Icon w={14} h={18} c="none"><path d="M3 6a4 4 0 018 0zM3 7h8v7H3z" fill="#97b93c" /><path d="M1.300 8v4M12.700 8v4M5 13v4M9 13v4" stroke="#97b93c" strokeWidth="1.800" strokeLinecap="round" /><path d="M4 .5l1.500 2M10 .5l-1.500 2" stroke="#97b93c" /></Icon> },
];

function Taskbar() {
  return (
    <div className="flex h-[30px] shrink-0 items-stretch bg-[linear-gradient(to_right,#233841,#1e3640_50%,#1d3040_70%,#1a2542_90%)] text-white">
      <button type="button" aria-label="Start" className="flex w-9 items-center justify-center">
        <Icon c="none"><path d="M0 2l7-1v6.500H0zM8 1l8-1v7.500H8zM0 8.500h7V15l-7-1zM8 8.500h8V16l-8-1z" fill="#fff" /></Icon>
      </button>
      <button type="button" aria-label="Search" className="flex w-9 items-center justify-center">
        <Icon w={17} h={17} c="#fff" sw={1.3}><circle cx="10.500" cy="6" r="5" /><path d="M7 10l-6 6.500" /></Icon>
      </button>
      <button type="button" aria-label="Task view" className="mr-0.5 flex w-9 items-center justify-center">
        <Icon w={17} c="#fff" sw={1.2}><path d="M.5 0v3.500h11V0M.5 16v-3.500h11V16M.5 5.500h11v5H.5zM15 0v3M15 7v9" /><path d="M14 3.500h2v3h-2z" fill="#fff" /></Icon>
      </button>
      {apps.map((a) => (
        <button
          key={a.label}
          type="button"
          aria-label={a.label}
          className={a.on ? "flex w-[37px] flex-col items-center bg-[#50656e]" : "flex w-[37px] flex-col items-center"}
        >
          <span className="flex flex-1 items-center">{a.art}</span>
          <span className={a.on ? "h-0.5 w-full bg-[#76b9ed]" : a.open ? "h-0.5 w-7 bg-[#76b9ed]" : "h-0.5"} />
        </button>
      ))}
      <div className="ml-auto flex items-center">
        <div className="flex items-center gap-2.5">
          <span className="mr-0.5 flex"><Icon w={12} h={8} c="#fff" sw={1.2}><path d="M.5 7L6 1.500 11.500 7" /></Icon></span>
          <Icon w={12} h={16} c="#fff"><rect x=".5" y="4.500" width="8" height="7" rx="1" /><path d="M8.500 7l3-1.500v5l-3-1.500M2 2c2-1.500 5-1.500 7 0M2 14c2 1.500 5 1.500 7 0" /></Icon>
          <Icon w={16} h={14} c="#fff"><path d="M5.500 4.500h9v6h-9z" /><path d="M7 6h6v3H7zM15 6h1v3h-1z" fill="#fff" /><path d="M1 2.500h4v3H1zM2 0v2M4 0v2M3 6v6.500h3" /></Icon>
          <Icon w={13} h={14} c="#fff"><path d="M.5 13A12 12 0 0112.500 1.500" opacity=".5" /><path d="M3.500 13a9 9 0 019-8M6.500 13a6 6 0 016-5M9.500 13.500a3 3 0 013-3" /><path d="M11 12h1v2h-1z" fill="#fff" /></Icon>
          <Icon w={16} h={14} c="#fff"><path d="M.5 5h3L7.500 1v12l-4-4h-3zM9.500 5q1.500 2 0 4M11.500 3q3 4 0 8" /><path d="M13.500 1q4 6 0 12" opacity=".5" /></Icon>
        </div>
        <span className="ml-3 text-xs">9:50 AM</span>
        <button type="button" aria-label="Notifications" className="ml-[21px]">
          <Icon w={17} h={16} c="none"><path d="M0 0h16v12h-5l-3 4-2.500-4H0z" fill="#fff" /><path d="M3 3.500h10M3 6.500h10M3 9.500h6" stroke="#1a2542" /></Icon>
        </button>
        <span className="ml-5 mr-1 h-[30px] w-px bg-[#5a6480]" />
      </div>
    </div>
  );
}

export default function App() {
  return (
    <div className="flex h-screen flex-col overflow-hidden bg-[#f5f7fa] font-['Noto_Sans','Open_Sans',sans-serif]">
      <TitleBar />
      <MenuRow />
      <Ribbon />
      <div className="flex min-h-0 flex-1">
        <Document />
        <ScrollBar />
        <StylesPanel />
        <SideRail />
      </div>
      <StatusBar />
      <Taskbar />
    </div>
  );
}
